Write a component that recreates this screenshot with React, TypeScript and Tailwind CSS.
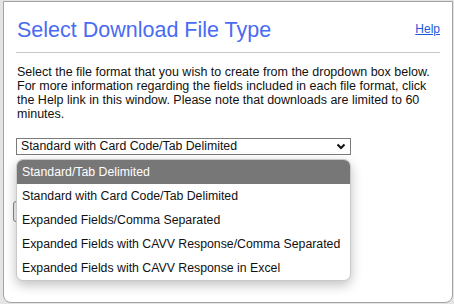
import React from "react";

const options = [
  "Standard/Tab Delimited",
  "Standard with Card Code/Tab Delimited",
  "Expanded Fields/Comma Separated",
  "Expanded Fields with CAVV Response/Comma Separated",
  "Expanded Fields with CAVV Response in Excel",
];

export default function App() {
  return (
    <div
      className="w-[454px] h-[304px] bg-[#e4e4e4] pl-[3px] pr-[1px] pt-[1px] pb-[1px] overflow-hidden"
      style={{ fontFamily: '"Liberation Sans", Arial, sans-serif' }}
    >
      <div className="relative h-full bg-white border border-[#a3a3a3] rounded-b-[8px] px-[12px]">
        <div className="flex justify-between items-start pt-[15px]">
          <h1 className="text-[21.5px] leading-[26px] text-[#4a6cf2] ml-[1px]">Select Download File Type</h1>
          <a href="#" className="text-[12px] leading-[14px] text-[#1b5ad6] underline mt-[5px]">
            Help
          </a>
        </div>
        <div className="h-px bg-[#c8c8c8] mt-[9px]" />
        <p className="text-[12.5px] leading-[14px] text-[#111] mt-[12px] ml-[1px] pr-[2px]">
          Select the file format that you wish to create from the dropdown box below. For more information regarding
          the fields included in each file format, click the Help link in this window. Please note that downloads are
          limited to 60 minutes.
        </p>
        <div className="mt-[17px] w-[335px] h-[17px] border border-[#7a7a7a] flex items-center justify-between pl-[4px] pr-[4px] text-[12.3px] text-[#111]">
          <span>Standard with Card Code/Tab Delimited</span>
          <svg width="10" height="7" viewBox="0 0 10 7">
            <path d="M1.5 1.5 L5 5 L8.5 1.5" fill="none" stroke="#111" strokeWidth="2" />
          </svg>
        </div>
        <div className="mt-[46px] -ml-[3px] w-[70px] h-[21px] border border-[#888] rounded-[3px] bg-[#f5f5f5]" />
        <div className="absolute left-[12px] top-[157px] w-[335px] bg-white border border-[#c9c9c9] rounded-[7px] overflow-hidden shadow-[0_4px_12px_rgba(0,0,0,0.25)]">
          {options.map((o, i) => (
            <div
              key={o}
              className={
                "h-[24px] flex items-center pl-[5px] text-[12.3px] " +
                (i === 0 ? "bg-[#777777] text-white" : "text-[#111]")
              }
            >
              {o}
            </div>
          ))}
        </div>
      </div>
    </div>
  );
}
